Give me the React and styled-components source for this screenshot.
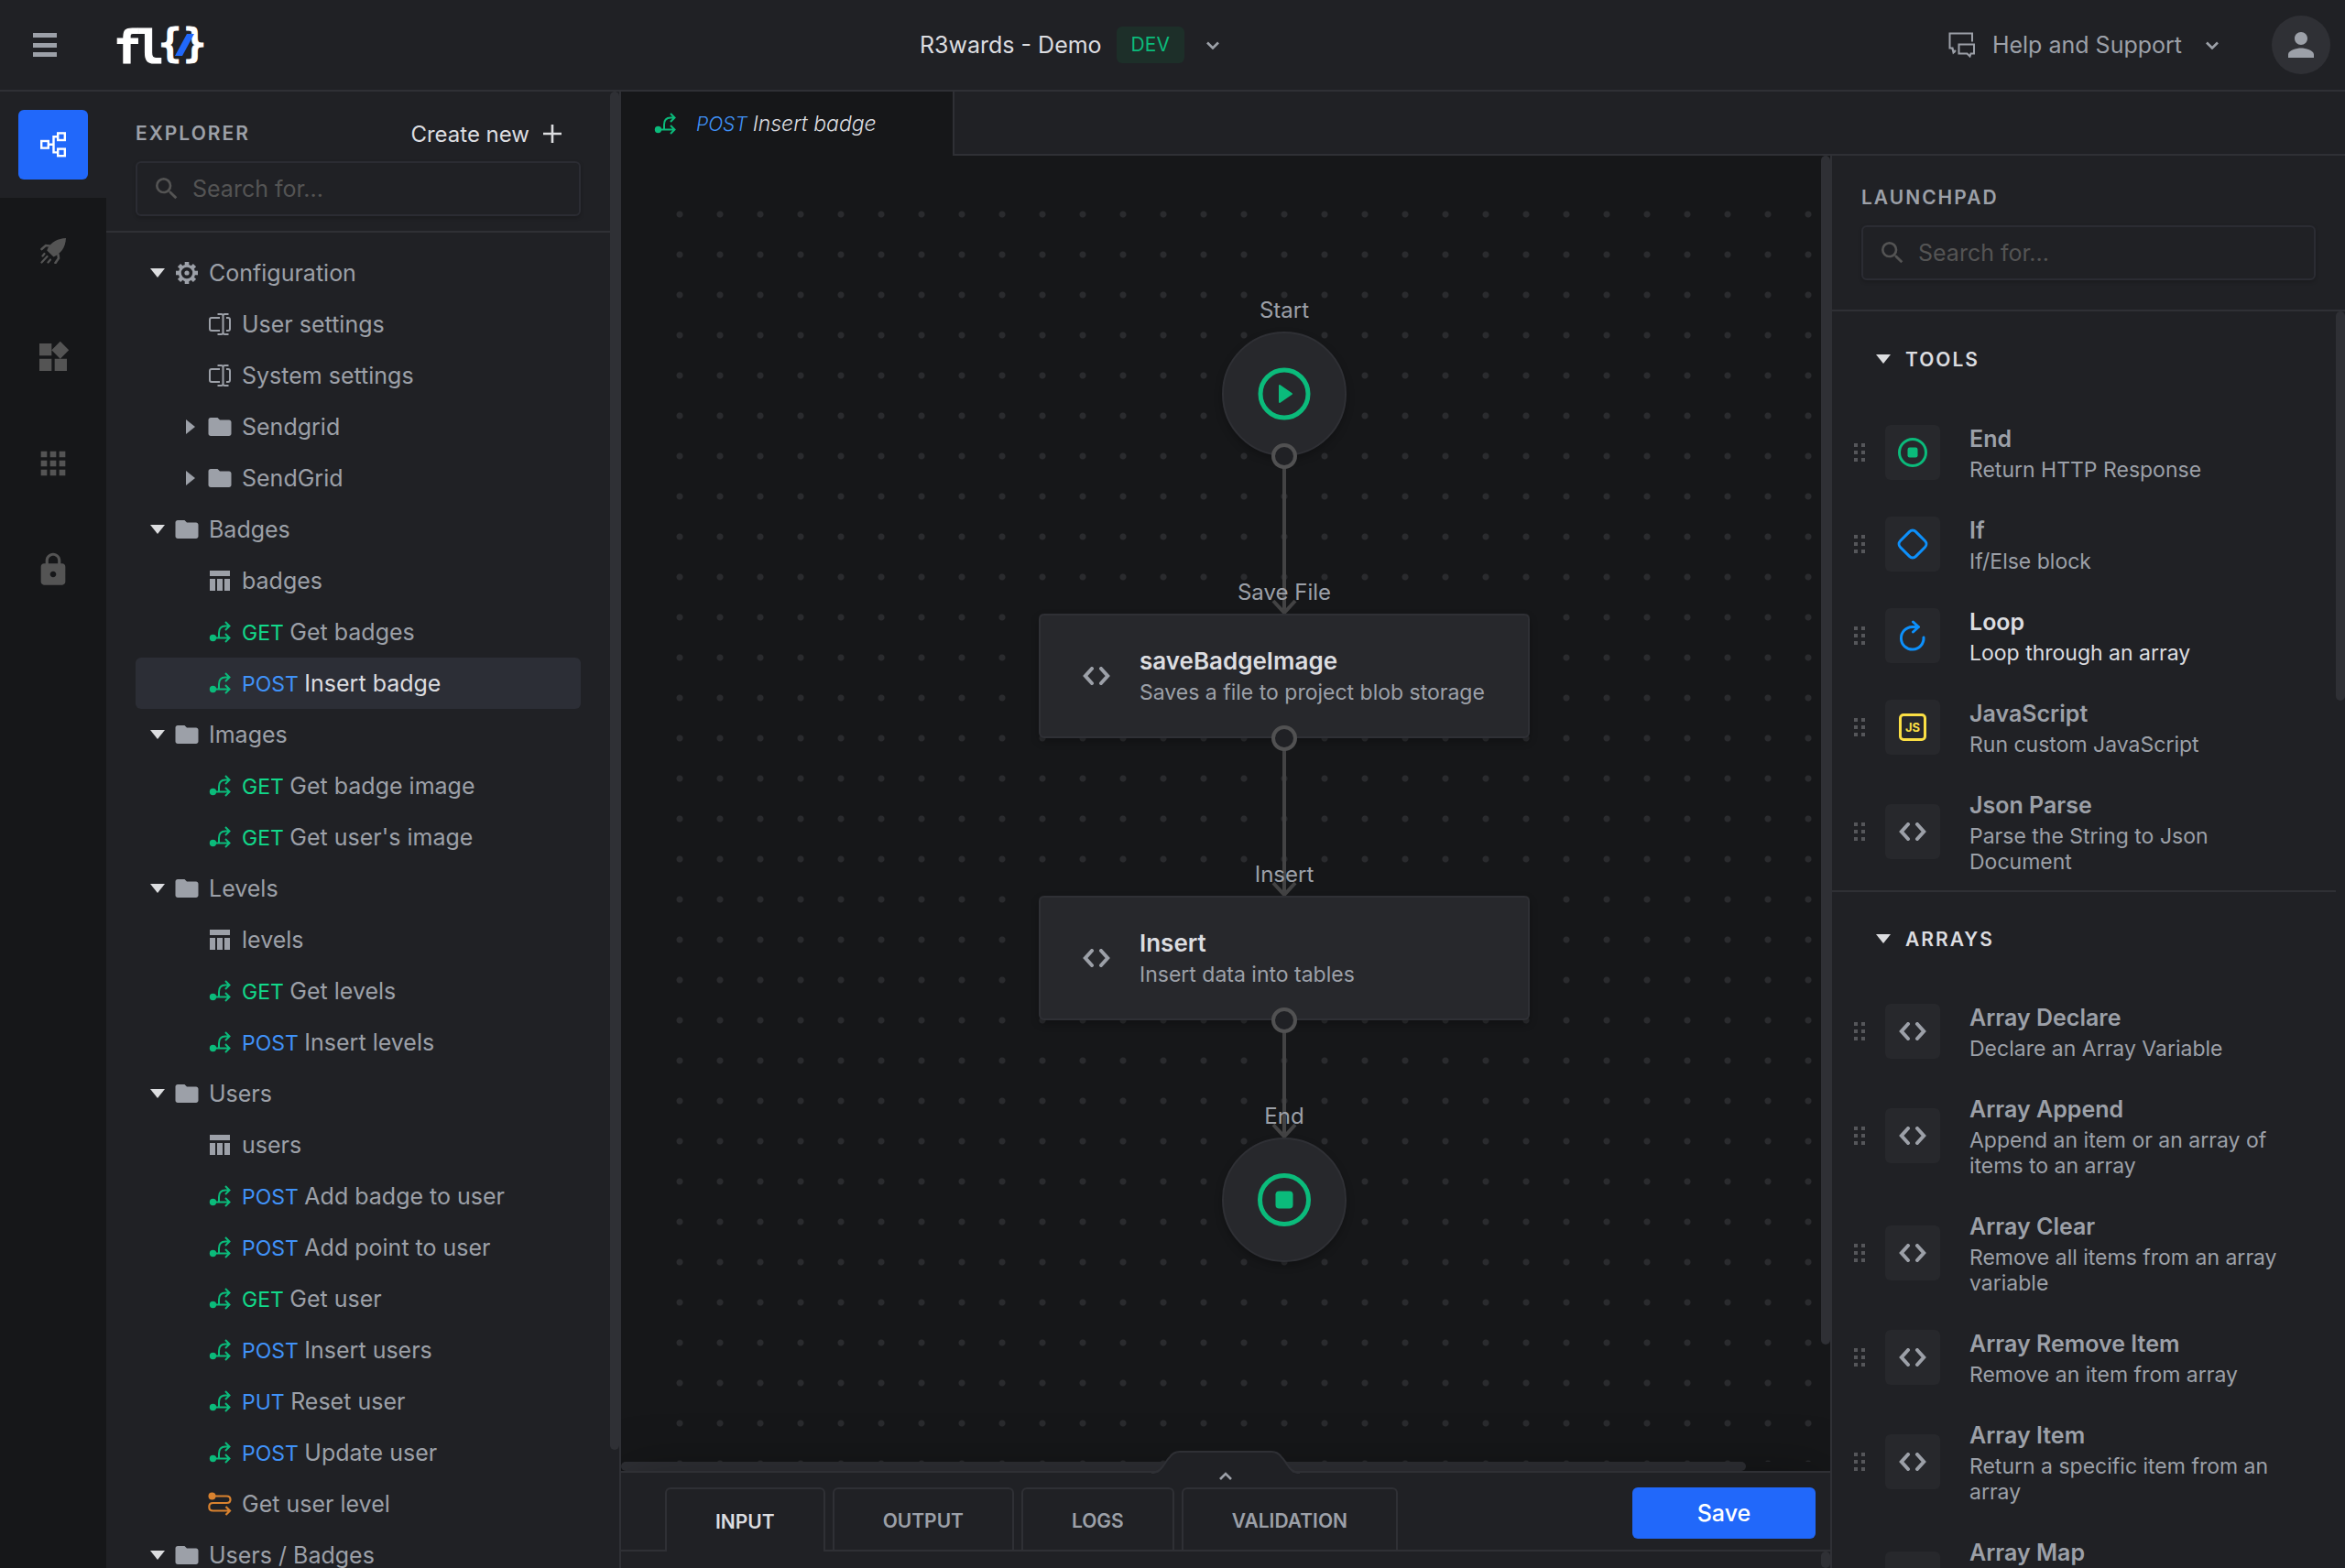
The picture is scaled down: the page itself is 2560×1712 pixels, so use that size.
import React, { useState } from 'react';
import styled, { createGlobalStyle, css } from 'styled-components'
import { MdApps, MdFolder, MdLock, MdPerson, MdSearch, MdWidgets } from 'react-icons/md'

const color = {
  panel: '#202125',
  dark: '#161719',
  line: '#2f3035',
  field: '#2b2c33',
  card: '#27282c',
  selected: '#2c2e36',
  text: '#9ca0a8',
  bright: '#dcdde0',
  muted: '#545454',
  wire: '#434344',
  port: '#515152',
  green: '#0bbb7b',
  lime: '#12d98a',
  blue: '#2168fa',
  sky: '#0d90fb',
  post: '#4092f8',
  orange: '#d9822f',
  yellow: '#fbdf44',
}

const tree = [
  { level: 0, open: true, icon: 'gear', name: 'Configuration' },
  { level: 1, icon: 'field', name: 'User settings' },
  { level: 1, icon: 'field', name: 'System settings' },
  { level: 1, open: false, icon: 'folder', name: 'Sendgrid' },
  { level: 1, open: false, icon: 'folder', name: 'SendGrid' },
  { level: 0, open: true, icon: 'folder', name: 'Badges' },
  { level: 1, icon: 'table', name: 'badges' },
  { level: 1, icon: 'api', method: 'GET', name: 'Get badges' },
  { level: 1, icon: 'api', method: 'POST', name: 'Insert badge' },
  { level: 0, open: true, icon: 'folder', name: 'Images' },
  { level: 1, icon: 'api', method: 'GET', name: 'Get badge image' },
  { level: 1, icon: 'api', method: 'GET', name: "Get user's image" },
  { level: 0, open: true, icon: 'folder', name: 'Levels' },
  { level: 1, icon: 'table', name: 'levels' },
  { level: 1, icon: 'api', method: 'GET', name: 'Get levels' },
  { level: 1, icon: 'api', method: 'POST', name: 'Insert levels' },
  { level: 0, open: true, icon: 'folder', name: 'Users' },
  { level: 1, icon: 'table', name: 'users' },
  { level: 1, icon: 'api', method: 'POST', name: 'Add badge to user' },
  { level: 1, icon: 'api', method: 'POST', name: 'Add point to user' },
  { level: 1, icon: 'api', method: 'GET', name: 'Get user' },
  { level: 1, icon: 'api', method: 'POST', name: 'Insert users' },
  { level: 1, icon: 'api', method: 'PUT', name: 'Reset user' },
  { level: 1, icon: 'api', method: 'POST', name: 'Update user' },
  { level: 1, icon: 'flow', name: 'Get user level' },
  { level: 0, open: true, icon: 'folder', name: 'Users / Badges' },
]

const launchpad = [
  {
    title: 'TOOLS',
    items: [
      { icon: 'end', name: 'End', text: 'Return HTTP Response' },
      { icon: 'if', name: 'If', text: 'If/Else block' },
      { icon: 'loop', name: 'Loop', text: 'Loop through an array', active: true },
      { icon: 'js', name: 'JavaScript', text: 'Run custom JavaScript' },
      { icon: 'code', name: 'Json Parse', text: 'Parse the String to Json Document' },
    ],
  },
  {
    title: 'ARRAYS',
    items: [
      { icon: 'code', name: 'Array Declare', text: 'Declare an Array Variable' },
      { icon: 'code', name: 'Array Append', text: 'Append an item or an array of items to an array' },
      { icon: 'code', name: 'Array Clear', text: 'Remove all items from an array variable' },
      { icon: 'code', name: 'Array Remove Item', text: 'Remove an item from array' },
      { icon: 'code', name: 'Array Item', text: 'Return a specific item from an array' },
      { icon: 'code', name: 'Array Map', text: 'Create a new array from the items of an array' },
    ],
  },
]

// x is the middle of the node, y its top edge
const nodes = [
  { id: 'start', round: true, x: 682, y: 150, label: 'Start' },
  { id: 'save', x: 682, y: 458, label: 'Save File', name: 'saveBadgeImage', text: 'Saves a file to project blob storage' },
  { id: 'insert', x: 682, y: 766, label: 'Insert', name: 'Insert', text: 'Insert data into tables' },
  { id: 'end', round: true, last: true, x: 682, y: 1030, label: 'End' },
]
const NODE_HEIGHT = 136

export default function App() {
  const [selected, setSelected] = useState('Insert badge')
  const [tab, setTab] = useState('INPUT')

  return (
    <>
      <GlobalStyle />
      <Page>
        <Header>
          <Brand>
            <IconButton aria-label="Menu"><MenuSvg /></IconButton>
            <LogoSvg />
          </Brand>
          <Project>
            R3wards - Demo
            <Env>DEV</Env>
            <ChevronSvg />
          </Project>
          <Account>
            <Help><ChatSvg />Help and Support<ChevronSvg /></Help>
            <Avatar aria-label="Account"><MdPerson size={42} /></Avatar>
          </Account>
        </Header>
        <Body>
          <Rail>
            <RailCell $active><RailButton $active aria-label="Flows"><SchemaSvg /></RailButton></RailCell>
            <RailCell><RailButton aria-label="Deploy"><RocketSvg /></RailButton></RailCell>
            <RailCell><RailButton aria-label="Modules"><MdWidgets size={40} /></RailButton></RailCell>
            <RailCell><RailButton aria-label="Apps"><MdApps size={40} /></RailButton></RailCell>
            <RailCell><RailButton aria-label="Security"><MdLock size={40} /></RailButton></RailCell>
          </Rail>
          <Explorer>
            <ExplorerMain>
              <ExplorerHead>
                <TitleRow>
                  <PanelTitle>EXPLORER</PanelTitle>
                  <CreateButton>Create new<PlusSvg /></CreateButton>
                </TitleRow>
                <Search label="Search explorer" />
              </ExplorerHead>
              <Tree>
                {tree.map(row => (
                  <TreeRow
                    key={row.name}
                    $level={row.level}
                    $selected={row.name === selected}
                    onClick={() => setSelected(row.name)}
                  >
                    <CaretSlot>{row.open !== undefined && <CaretSvg open={row.open} />}</CaretSlot>
                    <TreeIcon><TreeSvg name={row.icon} /></TreeIcon>
                    <TreeText>
                      {row.method && <Method $method={row.method}>{row.method} </Method>}
                      {row.name}
                    </TreeText>
                  </TreeRow>
                ))}
              </Tree>
            </ExplorerMain>
            <Track><Thumb $length={92} /></Track>
          </Explorer>
          <Workspace>
            <FileTabs>
              <FileTab>
                <ApiSvg />
                <span><Method $method="POST">POST </Method>Insert badge</span>
              </FileTab>
              <FileTabsRest />
            </FileTabs>
            <Columns>
              <Editor>
                <CanvasArea>
                  <Canvas><Board><Flow /></Board></Canvas>
                  <Track><Thumb $length={91} /></Track>
                </CanvasArea>
                <FlatTrack><FlatThumb $length={93} /></FlatTrack>
                <BottomPanel>
                  <Handle aria-label="Expand panel"><HandleSvg /></Handle>
                  <BottomBar>
                    <BottomTabs>
                      {['INPUT', 'OUTPUT', 'LOGS', 'VALIDATION'].map(name => (
                        <BottomTab key={name} $active={name === tab} onClick={() => setTab(name)}>{name}</BottomTab>
                      ))}
                    </BottomTabs>
                    <SaveButton>Save</SaveButton>
                  </BottomBar>
                  <BottomRest><Thumb $length={100} /></BottomRest>
                </BottomPanel>
              </Editor>
              <Launchpad>
                <LaunchHead>
                  <PanelTitle>LAUNCHPAD</PanelTitle>
                  <Search label="Search launchpad" />
                </LaunchHead>
                <LaunchBody>
                  <LaunchList>
                    {launchpad.map(section => (
                      <Section key={section.title}>
                        <SectionTitle><CaretSvg open />{section.title}</SectionTitle>
                        {section.items.map(item => (
                          <Item key={item.name} $active={item.active}>
                            <GripSvg />
                            <ItemIcon><ToolSvg name={item.icon} /></ItemIcon>
                            <div>
                              <ItemName>{item.name}</ItemName>
                              <ItemText>{item.text}</ItemText>
                            </div>
                          </Item>
                        ))}
                      </Section>
                    ))}
                  </LaunchList>
                  <Track><Thumb $length={31} /></Track>
                </LaunchBody>
              </Launchpad>
            </Columns>
          </Workspace>
        </Body>
      </Page>
    </>
  );
}

function Search(props) {
  return (
    <SearchBox>
      <MdSearch size={32} />
      <SearchInput type="text" placeholder="Search for..." aria-label={props.label} />
    </SearchBox>
  )
}

function Flow() {
  return (
    <>
      <Wires>
        {nodes.slice(1).map((node, i) => (
          <g key={node.id} stroke={color.wire} strokeWidth="4" fill="none">
            <path d={`M${node.x} ${nodes[i].y + NODE_HEIGHT}V${node.y}`} />
            <path d={`M${node.x - 12} ${node.y - 14}l12 13l12 -13`} />
          </g>
        ))}
      </Wires>
      {nodes.map(node => (
        <Node key={node.id} $x={node.x} $y={node.y} $round={node.round}>
          <NodeLabel>{node.label}</NodeLabel>
          {node.round && (node.last ? <EndSvg size={58} width={5} /> : <StartSvg />)}
          {!node.round && (
            <>
              <CodeSvg />
              <div>
                <NodeName>{node.name}</NodeName>
                <NodeText>{node.text}</NodeText>
              </div>
            </>
          )}
          {!node.last && <Port />}
        </Node>
      ))}
    </>
  )
}

function TreeSvg(props) {
  if (props.name === 'folder') return <MdFolder size={30} />
  if (props.name === 'gear') return <GearSvg />
  if (props.name === 'field') return <FieldSvg />
  if (props.name === 'table') return <TableSvg />
  if (props.name === 'flow') return <SnakeSvg />
  return <ApiSvg />
}

function ToolSvg(props) {
  if (props.name === 'end') return <EndSvg size={32} width={3} />
  if (props.name === 'if') return <IfSvg />
  if (props.name === 'loop') return <LoopSvg />
  if (props.name === 'js') return <JsBox>JS</JsBox>
  return <CodeSvg />
}

function MenuSvg() {
  return (
    <svg width="26" height="26" viewBox="0 0 26 26" fill={color.text}>
      <rect width="26" height="5" />
      <rect y="11" width="26" height="5" />
      <rect y="21" width="26" height="5" />
    </svg>
  )
}
function LogoSvg() {
  return (
    <Logo width="104" height="72" viewBox="0 0 104 72" role="img" aria-label="fl{/}">
      <text x="-4" y="56">f</text>
      <text x="21" y="56">l</text>
      <LogoBrace x="45" y="49">{'{'}</LogoBrace>
      <LogoBrace x="72" y="49">{'}'}</LogoBrace>
      <path d="M63 48L76 24H84L71 48Z" fill={color.blue} />
    </Logo>
  )
}
function ChevronSvg() {
  return (
    <svg width="14" height="9" viewBox="0 0 14 9" fill="none">
      <path d="M1 1.500L7 7.500L13 1.500" stroke={color.text} strokeWidth="2.600" />
    </svg>
  )
}
function ChatSvg() {
  return (
    <svg width="30" height="28" viewBox="0 0 30 28" fill="none" stroke={color.text} strokeWidth="2">
      <path d="M7 22.500L4.500 18.500V17.500H1.500V1.500H26V10.500" />
      <path d="M4.500 18L5.500 22.500L8 20" />
      <path d="M11.500 13.500H28V23.500H24.500L23.500 26.500L20.500 23.500H11.500Z" />
    </svg>
  )
}
function SchemaSvg() {
  return (
    <svg width="28" height="28" viewBox="0 0 28 28" fill="none" stroke="#fff" strokeWidth="2.400">
      <rect x="1.200" y="10" width="7.600" height="7.600" />
      <rect x="19.200" y="1.400" width="7.600" height="7.600" />
      <rect x="19.200" y="18.600" width="7.600" height="7.600" />
      <path d="M9 13.800H14.500M19 5.200H14.500V22.400H19" />
    </svg>
  )
}
function RocketSvg() {
  return (
    <svg width="28" height="28" viewBox="0 0 28 28" fill="currentColor">
      <path d="M28 0C19 0.500 12.500 4 8.500 10.500C8 11.500 7.500 12.500 7.300 13.500L14.500 20.500C22.500 17 27.500 10 28 0Z" />
      <path d="M10 8.500L6 8L1.500 12M19.500 18L20 22L16.500 27" fill="none" stroke="currentColor" strokeWidth="2.600" strokeLinecap="round" />
      <path d="M4.500 17L2.500 19.500M7.500 20L1.500 26.500M11 23.500L8.500 26.500" fill="none" stroke="currentColor" strokeWidth="2.200" strokeLinecap="round" />
    </svg>
  )
}
function PlusSvg() {
  return (
    <svg width="22" height="22" viewBox="0 0 22 22">
      <path d="M11 1V21M1 11H21" stroke={color.bright} strokeWidth="2.600" />
    </svg>
  )
}
function CaretSvg(props) {
  return props.open
    ? <svg width="16" height="10" viewBox="0 0 16 10"><path d="M0 0H16L8 10Z" fill={color.bright} /></svg>
    : <svg width="10" height="16" viewBox="0 0 10 16"><path d="M0 0V16L10 8Z" fill={color.text} /></svg>
}
function GearSvg() {
  return (
    <svg width="26" height="26" viewBox="0 0 26 26" fill="none" stroke="currentColor">
      <circle cx="13" cy="13" r="7.700" strokeWidth="3" />
      <circle cx="13" cy="13" r="2.600" fill="currentColor" stroke="none" />
      {[0, 45, 90, 135, 180, 225, 270, 315].map(angle => (
        <path key={angle} d="M13 1V5" strokeWidth="4.600" transform={`rotate(${angle} 13 13)`} />
      ))}
    </svg>
  )
}
function FieldSvg() {
  return (
    <svg width="24" height="24" viewBox="0 0 24 24" fill="none" stroke="currentColor" strokeWidth="2">
      <path d="M12 5H3Q1 5 1 7V17Q1 19 3 19H12" />
      <path d="M19 5H21Q23 5 23 7V17Q23 19 21 19H19" />
      <path d="M15.500 2.500V21.500M9.500 1H13.500Q15.500 1 15.500 3Q15.500 1 17.500 1H21.500M9.500 23H13.500Q15.500 23 15.500 21Q15.500 23 17.500 23H21.500" />
    </svg>
  )
}
function TableSvg() {
  return (
    <svg width="22" height="22" viewBox="0 0 22 22" fill="currentColor">
      <rect width="22" height="6" />
      <rect y="9" width="6" height="13" />
      <rect x="8" y="9" width="6" height="13" />
      <rect x="16" y="9" width="6" height="13" />
    </svg>
  )
}
function ApiSvg() {
  return (
    <svg width="24" height="24" viewBox="0 0 24 24" fill="none" stroke={color.green} strokeWidth="2">
      <circle cx="4.500" cy="18.500" r="3.700" fill={color.green} stroke="none" />
      <path d="M5 18.500H22.500M18 14L22.500 18.500L18 23" />
      <path d="M11 18.500V13Q11 5.500 18 5.500H22.500M18 1L22.500 5.500L18 10" />
    </svg>
  )
}
function SnakeSvg() {
  return (
    <svg width="26" height="26" viewBox="0 0 26 26" fill="none" stroke={color.orange} strokeWidth="2.200">
      <circle cx="4.500" cy="4.500" r="4" fill={color.orange} stroke="none" />
      <path d="M5 4.500H20.500Q24.500 4.500 24.500 8.200Q24.500 12 20.500 12H5.500Q1.300 12 1.300 16.200Q1.300 20.500 5.500 20.500H24M19.500 16L24 20.500L19.500 25" />
    </svg>
  )
}
function CodeSvg() {
  return (
    <svg width="30" height="20" viewBox="0 0 30 20" fill="none" stroke={color.text} strokeWidth="4" strokeLinecap="round">
      <path d="M10 2L2.800 10L10 18M20 2L27.200 10L20 18" />
    </svg>
  )
}
function StartSvg() {
  return (
    <svg width="58" height="58" viewBox="0 0 58 58">
      <circle cx="29" cy="29" r="26" fill="none" stroke={color.green} strokeWidth="5" />
      <path d="M24 20L37 29L24 38Z" fill={color.green} stroke={color.green} strokeWidth="2" strokeLinejoin="round" />
    </svg>
  )
}
function EndSvg(props) {
  const half = props.size / 2
  const side = Math.round(props.size / 3)
  return (
    <svg width={props.size} height={props.size}>
      <circle cx={half} cy={half} r={half - props.width / 2} fill="none" stroke={color.green} strokeWidth={props.width} />
      <rect x={half - side / 2} y={half - side / 2} width={side} height={side} rx={side / 5} fill={color.green} />
    </svg>
  )
}
function IfSvg() {
  return (
    <svg width="36" height="36" viewBox="0 0 36 36">
      <rect x="6" y="6" width="24" height="24" rx="5" fill="none" stroke={color.sky} strokeWidth="3" transform="rotate(45 18 18)" />
    </svg>
  )
}
function LoopSvg() {
  return (
    <svg width="34" height="34" viewBox="0 0 34 34" fill="none" stroke={color.sky} strokeWidth="3" strokeLinecap="round" strokeLinejoin="round">
      <path d="M29 19A12.300 12.300 0 1 1 16.500 7.500H23" />
      <path d="M17.500 2L23.500 7.500L17.500 13" />
    </svg>
  )
}
function GripSvg() {
  return (
    <svg width="12" height="20" viewBox="0 0 12 20" fill="#55565a">
      {[0, 8, 16].map(y => (
        <path key={y} d={`M0 ${y}h4v4h-4zM8 ${y}h4v4h-4z`} />
      ))}
    </svg>
  )
}
function HandleSvg() {
  return (
    <svg width="162" height="36" viewBox="0 0 162 36" fill="none">
      <path d="M0 26C12 26 14 12 20 7Q24 1 31 1H131Q138 1 142 7C148 12 150 26 162 26V36H0Z" fill={color.panel} />
      <path d="M0 24C12 24 14 12 20 7Q24 1 31 1H131Q138 1 142 7C148 12 150 24 162 24" stroke={color.line} strokeWidth="2" />
      <path d="M75 31L81 25L87 31" stroke={color.text} strokeWidth="2.600" />
    </svg>
  )
}

const GlobalStyle = createGlobalStyle`
  * {
    box-sizing: border-box;
  }
  body {
    margin: 0;
    background: ${color.dark};
    color: ${color.text};
    font-family: Inter, "Open Sans", sans-serif;
    font-size: 25px;
  }
  button {
    margin: 0;
    padding: 0;
    border: 0;
    background: none;
    color: inherit;
    font: inherit;
    cursor: pointer;
  }
  svg {
    flex: none;
    display: block;
  }
`

const Page = styled.div`
  display: flex;
  flex-direction: column;
  height: 100vh;
  overflow: hidden;
`
const Header = styled.header`
  display: flex;
  align-items: center;
  justify-content: space-between;
  height: 100px;
  flex: none;
  padding: 0 16px 0 36px;
  background: ${color.panel};
  border-bottom: 2px solid ${color.line};
`
const Brand = styled.div`
  display: flex;
  align-items: center;
  gap: 66px;
`
const IconButton = styled.button`
  display: flex;
`
const Logo = styled.svg`
  overflow: visible;
  fill: #fff;
  stroke: #fff;
  stroke-width: 1px;
  font-family: "DejaVu Sans Mono", monospace;
  font-weight: bold;
  font-size: 50px;

  path {
    stroke: none;
  }
`
const LogoBrace = styled.text`
  font-size: 42px;
`
const Project = styled.button`
  display: flex;
  align-items: center;
  padding-right: 24px;
  color: ${color.bright};

  svg {
    margin-left: 24px;
  }
`
const Env = styled.span`
  margin-left: 16px;
  padding: 0 16px;
  border-radius: 6px;
  background: #1d2f29;
  color: ${color.green};
  font-size: 21px;
  line-height: 40px;
`
const Account = styled.div`
  display: flex;
  align-items: center;
  gap: 58px;
`
const Help = styled.button`
  display: flex;
  align-items: center;
  gap: 18px;

  svg:last-child {
    margin-left: 8px;
  }
`
const Avatar = styled.button`
  display: flex;
  align-items: center;
  justify-content: center;
  width: 64px;
  height: 64px;
  border-radius: 50%;
  background: ${color.line};
`

const Body = styled.div`
  display: flex;
  flex: 1;
  min-height: 0;
`
const Rail = styled.nav`
  width: 116px;
  flex: none;
`
const RailCell = styled.div`
  padding: 20px;
  background: ${props => props.$active ? color.panel : 'transparent'};
`
const RailButton = styled.button`
  display: flex;
  align-items: center;
  justify-content: center;
  width: 76px;
  height: 76px;
  border-radius: 6px;
  color: ${color.muted};
  background: ${props => props.$active ? color.blue : 'transparent'};
`

const Track = styled.div`
  width: 10px;
  flex: none;
`
const Thumb = styled.div`
  width: 10px;
  height: ${props => props.$length}%;
  border-radius: 5px;
  background: ${color.line};
`
const Explorer = styled.aside`
  display: flex;
  width: 562px;
  flex: none;
  background: ${color.panel};
  border-right: 2px solid ${color.line};
`
const ExplorerMain = styled.div`
  flex: 1;
  overflow: hidden;
`
const ExplorerHead = styled.div`
  padding: 16px 32px;
  border-bottom: 2px solid ${color.line};
`
const TitleRow = styled.div`
  display: flex;
  align-items: center;
  justify-content: space-between;
  height: 60px;
  padding-right: 20px;
`
const PanelTitle = styled.h2`
  margin: 0;
  font-size: 21px;
  line-height: 60px;
  font-weight: 600;
  letter-spacing: 2px;
`
const CreateButton = styled.button`
  display: flex;
  align-items: center;
  gap: 14px;
  color: ${color.bright};
  font-size: 24px;
`
const SearchBox = styled.label`
  display: flex;
  align-items: center;
  gap: 12px;
  height: 60px;
  padding: 0 16px;
  border: 2px solid ${color.field};
  border-radius: 6px;
  box-shadow: 0 2px 4px rgba(0, 0, 0, 0.2);
  color: ${color.muted};
`
const SearchInput = styled.input`
  flex: 1;
  min-width: 0;
  padding: 0;
  border: 0;
  outline: 0;
  background: none;
  color: ${color.bright};
  font: inherit;

  &::placeholder {
    color: ${color.muted};
    opacity: 1;
  }
`
const Tree = styled.div`
  padding: 16px 32px;
`
const TreeRow = styled.button`
  display: flex;
  align-items: center;
  width: 100%;
  height: 56px;
  padding-left: ${props => 12 + props.$level * 36}px;
  border-radius: 6px;
  text-align: left;
  white-space: nowrap;
  ${props => props.$selected && css`
    background: ${color.selected};
    color: ${color.bright};
  `}
`
const CaretSlot = styled.span`
  display: flex;
  justify-content: center;
  width: 24px;
`
const TreeIcon = styled.span`
  display: flex;
  justify-content: center;
  width: 40px;
  color: ${color.text};
`
const TreeText = styled.span`
  padding-left: 4px;
`
const Method = styled.span`
  color: ${props => props.$method === 'GET' ? color.lime : color.post};
  font-size: 23px;
`

const Workspace = styled.main`
  display: flex;
  flex-direction: column;
  flex: 1;
  min-width: 0;
`
const FileTabs = styled.div`
  display: flex;
  height: 70px;
  flex: none;
`
const FileTab = styled.button`
  display: flex;
  align-items: center;
  gap: 22px;
  width: 362px;
  padding: 0 36px;
  color: ${color.bright};
  font-size: 23px;
  font-style: italic;
  font-weight: 300;

  ${Method} {
    font-size: 21px;
  }
`
const FileTabsRest = styled.div`
  flex: 1;
  background: ${color.panel};
  border: solid ${color.line};
  border-width: 0 0 2px 2px;
`
const Columns = styled.div`
  display: flex;
  flex: 1;
  min-height: 0;
`
const Editor = styled.section`
  display: flex;
  flex-direction: column;
  flex: 1;
  min-width: 0;
`
const CanvasArea = styled.div`
  display: flex;
  flex: 1;
  min-height: 0;
`
const Canvas = styled.div`
  display: flex;
  flex: 1;
  min-width: 0;
  padding: 42px 0 0 42px;
  overflow: hidden;
`
const Board = styled.div`
  position: relative;
  flex: 1;
  background-image: radial-gradient(circle, #2a2b2e 3px, transparent 4px);
  background-size: 44px 44px;
`
const Wires = styled.svg`
  position: absolute;
  width: 100%;
  height: 100%;
`
const Node = styled.div`
  position: absolute;
  left: ${props => props.$x}px;
  top: ${props => props.$y}px;
  transform: translateX(-50%);
  display: flex;
  align-items: center;
  width: 536px;
  height: ${NODE_HEIGHT}px;
  padding: 0 46px;
  gap: 32px;
  background: ${color.card};
  border: 2px solid ${color.line};
  border-radius: 6px;
  box-shadow: 0 4px 8px rgba(0, 0, 0, 0.25);
  ${props => props.$round && css`
    justify-content: center;
    width: ${NODE_HEIGHT}px;
    padding: 0;
    border-radius: 50%;
  `}
`
const NodeLabel = styled.div`
  position: absolute;
  bottom: 100%;
  left: 50%;
  transform: translateX(-50%);
  line-height: 50px;
  font-size: 24px;
  white-space: nowrap;
`
const NodeName = styled.div`
  color: ${color.bright};
  font-size: 26px;
  font-weight: 600;
  line-height: 36px;
`
const NodeText = styled.div`
  font-size: 23px;
  line-height: 32px;
  white-space: nowrap;
`
const Port = styled.div`
  position: absolute;
  bottom: -16px;
  left: 50%;
  transform: translateX(-50%);
  width: 28px;
  height: 28px;
  border: 4px solid ${color.port};
  border-radius: 50%;
  background: ${color.panel};
`
const FlatTrack = styled.div`
  height: 10px;
  flex: none;
`
const FlatThumb = styled.div`
  width: ${props => props.$length}%;
  height: 10px;
  border-radius: 5px;
  background: ${color.line};
`
const BottomPanel = styled.div`
  position: relative;
  flex: none;
  background: ${color.panel};
  border-top: 2px solid ${color.line};
  box-shadow: 0 0 60px rgba(0, 0, 0, 0.3);
  clip-path: inset(-100px 0 0 0);
`
const Handle = styled.button`
  position: absolute;
  bottom: 100%;
  left: 50%;
  transform: translate(-50%, 12px);
`
const BottomBar = styled.div`
  display: flex;
  justify-content: space-between;
  height: 86px;
  padding: 16px 16px 0 48px;
  border-bottom: 2px solid ${color.line};
`
const BottomTabs = styled.div`
  display: flex;
  gap: 8px;
`
const BottomTab = styled.button`
  height: ${props => props.$active ? 70 : 68}px;
  padding: 2px 53px 0;
  border: 2px solid ${color.line};
  border-bottom: 0;
  border-radius: 6px 6px 0 0;
  background: ${color.panel};
  color: ${props => props.$active ? color.bright : color.text};
  font-size: 21px;
  font-weight: 600;
`
const SaveButton = styled.button`
  width: 200px;
  height: 56px;
  border-radius: 6px;
  background: ${color.blue};
  color: #fff;
  font-size: 25px;
  font-weight: 500;
`
const BottomRest = styled.div`
  display: flex;
  justify-content: flex-end;
  height: 18px;
`

const Launchpad = styled.aside`
  display: flex;
  flex-direction: column;
  width: 562px;
  flex: none;
  background: ${color.panel};
  border-left: 2px solid ${color.line};
`
const LaunchHead = styled.div`
  flex: none;
  padding: 16px 32px 32px;
  border-bottom: 2px solid ${color.line};
`
const LaunchBody = styled.div`
  display: flex;
  flex: 1;
  min-height: 0;
`
const LaunchList = styled.div`
  flex: 1;
  overflow: hidden;
`
const SectionTitle = styled.h3`
  display: flex;
  align-items: center;
  gap: 16px;
  height: 104px;
  margin: 0;
  padding-left: 48px;
  color: ${color.bright};
  font-size: 21px;
  font-weight: 600;
  letter-spacing: 2px;
`
const Section = styled.section`
  & + & ${SectionTitle} {
    border-top: 2px solid ${color.line};
  }
`
const Item = styled.div`
  display: grid;
  grid-template-columns: 12px 60px 1fr;
  column-gap: 22px;
  align-items: center;
  padding: 17px 40px 17px 24px;
  color: ${props => props.$active ? color.bright : color.text};
`
const ItemIcon = styled.div`
  display: flex;
  align-items: center;
  justify-content: center;
  height: 60px;
  border-radius: 6px;
  background: ${color.card};

  & + div {
    padding-left: 10px;
  }
`
const ItemName = styled.div`
  padding-bottom: 2px;
  font-size: 25px;
  font-weight: 600;
  line-height: 36px;
`
const ItemText = styled.div`
  font-size: 23px;
  line-height: 28px;
`
const JsBox = styled.div`
  width: 30px;
  border: 3px solid ${color.yellow};
  border-radius: 5px;
  color: ${color.yellow};
  font-size: 13px;
  font-weight: 700;
  line-height: 24px;
  text-align: center;
`
